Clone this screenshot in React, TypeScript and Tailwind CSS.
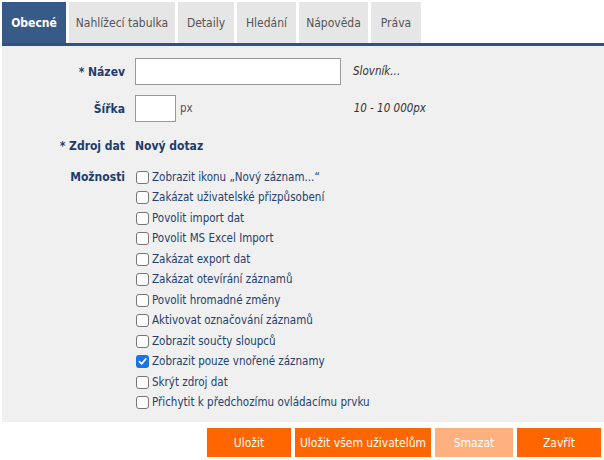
import React from "react";

const tabs = ["Obecné", "Nahlížecí tabulka", "Detaily", "Hledání", "Nápověda", "Práva"];
const tabW = ["w-[64px]", "w-[106px]", "w-[56px]", "w-[59px]", "w-[69px]", "w-[50px]"];

const options: [string, boolean][] = [
  ["Zobrazit ikonu „Nový záznam...“", false],
  ["Zakázat uživatelské přizpůsobení", false],
  ["Povolit import dat", false],
  ["Povolit MS Excel Import", false],
  ["Zakázat export dat", false],
  ["Zakázat otevírání záznamů", false],
  ["Povolit hromadné změny", false],
  ["Aktivovat označování záznamů", false],
  ["Zobrazit součty sloupců", false],
  ["Zobrazit pouze vnořené záznamy", true],
  ["Skrýt zdroj dat", false],
  ["Přichytit k předchozímu ovládacímu prvku", false],
];

function Box({ checked }: { checked: boolean }) {
  if (checked) {
    return (
      <span className="w-[13px] h-[13px] rounded-[3px] bg-[#1a73e8] flex items-center justify-center shrink-0">
        <svg width="9" height="9" viewBox="0 0 10 10">
          <path d="M1.5 5.2 L4 7.6 L8.6 2.2" fill="none" stroke="white" strokeWidth="1.9" strokeLinecap="round" strokeLinejoin="round" />
        </svg>
      </span>
    );
  }
  return <span className="w-[13px] h-[13px] rounded-[3px] border border-[#767676] bg-white shrink-0" />;
}

export default function App() {
  return (
    <div className="w-[604px] h-[460px] bg-white text-[12px] font-['DejaVu_Sans_Condensed','DejaVu_Sans',sans-serif] overflow-hidden">
      <div className="flex gap-[3px] pl-[2px] pt-[2px] h-[43px]">
        {tabs.map((t, i) => (
          <div
            key={t}
            className={`${tabW[i]} flex items-center justify-center whitespace-nowrap ${
              i === 0 ? "bg-[#375a87] text-white font-bold" : "bg-[#e6e6e6] text-[#555]"
            }`}
          >
            {t}
          </div>
        ))}
      </div>
      <div className="ml-[2px] h-[3px] bg-[#2f5283]" />
      <div className="ml-[2px] h-[376px] bg-[#f0f0f0] pt-[12px]">
        <div className="flex items-center h-[27px]">
          <div className="w-[123px] text-right font-bold text-[#1e3c6b]">* Název</div>
          <div className="ml-[10px] w-[206px] h-[27px] bg-white border border-[#999]" />
          <div className="ml-[12px] italic text-[#333] text-[11.5px]">Slovník...</div>
        </div>
        <div className="flex items-center h-[27px] mt-[10px]">
          <div className="w-[123px] text-right font-bold text-[#1e3c6b]">Šířka</div>
          <div className="ml-[10px] w-[41px] h-[27px] bg-white border border-[#999]" />
          <div className="ml-[4px] text-[#555] text-[11.5px]">px</div>
          <div className="ml-auto mr-[178px] italic text-[#333] text-[11.5px]">10 - 10 000px</div>
        </div>
        <div className="flex items-center h-[20px] mt-[14px]">
          <div className="w-[123px] text-right font-bold text-[#1e3c6b]">* Zdroj dat</div>
          <div className="ml-[10px] font-bold text-[#1e3c6b]">Nový dotaz</div>
        </div>
        <div className="flex mt-[11px]">
          <div className="w-[123px] text-right font-bold text-[#1e3c6b] leading-[20.5px]">Možnosti</div>
          <div className="ml-[11px] flex flex-col">
            {options.map(([label, c]) => (
              <div key={label} className="flex items-center h-[20.5px] gap-[3px] text-[#26406e] text-[11.5px]">
                <Box checked={c} />
                <span className="whitespace-nowrap">{label}</span>
              </div>
            ))}
          </div>
        </div>
      </div>
      <div className="flex justify-end gap-[4px] pr-[3px] mt-[6px]">
        <button className="w-[84px] h-[29px] bg-[#ff6600] text-white whitespace-nowrap">Uložit</button>
        <button className="w-[136px] h-[29px] bg-[#ff6600] text-white whitespace-nowrap">Uložit všem uživatelům</button>
        <button className="w-[78px] h-[29px] bg-[#ffb07f] text-white whitespace-nowrap">Smazat</button>
        <button className="w-[84px] h-[29px] bg-[#ff6600] text-white whitespace-nowrap">Zavřít</button>
      </div>
    </div>
  );
}
